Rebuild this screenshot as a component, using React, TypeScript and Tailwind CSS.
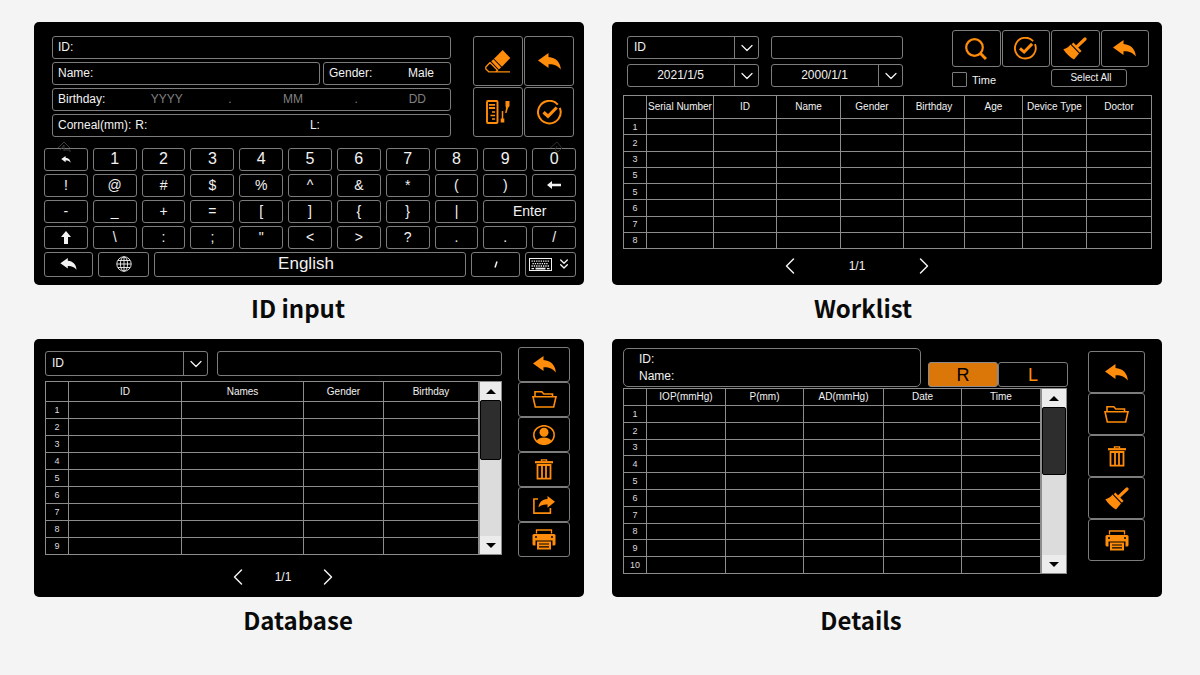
import { ChevronDown, ChevronLeft, ChevronRight, ChevronsDown } from "lucide-react";
import { ReactNode } from "react";

const ReplyIcon = ({ className = "w-[23px] h-[17px]" }: { className?: string }) => (
  <svg viewBox="0 0 23 17" className={className} fill="currentColor">
    <path d="M0 7.5 10.5 0v4C18 4.6 22.6 9.500 22.800 16.500 19.800 12.500 16 11 10.500 11.200V15z" />
  </svg>
);

const CheckIcon = ({ className = "size-[25px]" }: { className?: string }) => (
  <svg viewBox="0 0 25 25" className={className} fill="none" stroke="currentColor">
    <path d="M20.800 4.600A11.300 11.300 0 1 0 22.800 7.800" strokeWidth="2" />
    <path d="M6.500 12.300 11 16.300 19.700 7.500" strokeWidth="3.200" />
  </svg>
);

const EraserIcon = () => (
  <svg viewBox="0 0 26 23" className="w-[26px] h-[23px]" fill="none" stroke="currentColor">
    <path d="M17.700 0 25.300 8 17 16.800 9 8.700z" fill="currentColor" stroke="none" />
    <path d="M7.300 10.300 15 18.400" strokeWidth="3" />
    <path d="M5.300 12.200.8 17v2l3 2.800H25M5 12.500l7.500 7.700-1.700 1.600" strokeWidth="1.300" />
  </svg>
);

const MeasureIcon = () => (
  <svg viewBox="0 0 24 24" className="size-6" fill="none" stroke="currentColor">
    <rect x="1" y="1" width="10.500" height="22" rx="1" strokeWidth="1.900" />
    <path d="M3 4.800h6M3 8h6" strokeWidth="1.800" />
    <path d="M6 12h3M4.500 15.500H9M6 19h3" strokeWidth="1.600" />
    <path d="M16.500 11V20" strokeWidth="1.500" />
    <path d="M16.500 18.500v4" strokeWidth="3.600" />
    <path d="M19.500 1h4v5l-1.500 2-1.500 5h-1.300l.8-5-.5-2z" fill="currentColor" stroke="none" />
  </svg>
);

const SearchIcon = () => (
  <svg viewBox="0 0 22 22" className="size-[22px]" fill="none" stroke="currentColor">
    <circle cx="9.500" cy="9.500" r="8.300" strokeWidth="2.200" />
    <path d="M15.500 15.500 21 21" strokeWidth="3" />
  </svg>
);

const BrushIcon = () => (
  <svg viewBox="0 0 24 23" className="w-6 h-[23px]" fill="none" stroke="currentColor">
    <path d="M22 2 14.500 9.200" strokeWidth="3.200" strokeLinecap="round" />
    <path d="M9.500 6.300 17.700 14.800" strokeWidth="2.400" />
    <path
      d="M7.400 7.600 16 16.500 11 22.500C7.500 20.500 3 16.500.3 12.200 3.500 11.500 5.800 10 7.400 7.600z"
      fill="currentColor"
      stroke="none"
    />
  </svg>
);

const FolderIcon = () => (
  <svg viewBox="0 0 25 17" className="w-[25px] h-[17px]" fill="none" stroke="currentColor" strokeWidth="1.600">
    <path d="M3 5.800V.8h6.800l2 2.200h8.700v2.800" />
    <path d="M1 5.800h23L21.700 16H3.300z" />
  </svg>
);

const UserIcon = () => (
  <svg viewBox="0 0 22 20" className="w-[22px] h-5" fill="none" stroke="currentColor">
    <ellipse cx="11" cy="10" rx="10.200" ry="9.300" strokeWidth="1.500" />
    <circle cx="11" cy="7.300" r="4.500" fill="currentColor" stroke="none" />
    <path d="M3.500 16.500c1-3 4-4 7.500-4s6.500 1 7.500 4c-4 3.500-11 3.500-15 0z" fill="currentColor" stroke="none" />
  </svg>
);

const TrashIcon = () => (
  <svg viewBox="0 0 18 21" className="w-[18px] h-[21px]" fill="none" stroke="currentColor">
    <path d="M0 3.200h18" strokeWidth="2.200" />
    <path d="M6.500 2.500V.9h5v1.600" strokeWidth="1.400" />
    <path d="M2.500 6v13.700h13V6zM7 6v13.500M11 6v13.500" strokeWidth="1.800" />
  </svg>
);

const ShareIcon = () => (
  <svg viewBox="0 0 22 18" className="w-[22px] h-[18px]" fill="none" stroke="currentColor">
    <path d="M5 3H.9v14.100h16.500V12" strokeWidth="1.600" />
    <path d="M22 5.800 14.500 0v3C9 3.500 6 6.500 5.500 11.500 8 9 10.500 8.300 14.500 8.500v3.300z" fill="currentColor" stroke="none" />
  </svg>
);

const PrinterIcon = () => (
  <svg viewBox="0 0 24 21" className="w-6 h-[21px]">
    <path d="M4.500 4.500V1h15v3.500" fill="none" stroke="currentColor" strokeWidth="1.300" />
    <rect x="0.500" y="5" width="23" height="11.500" rx="1.500" fill="currentColor" />
    <circle cx="4" cy="8" r="1" fill="#000" />
    <circle cx="20" cy="8" r="1" fill="#000" />
    <rect x="3.500" y="11.500" width="17" height="9.500" fill="#000" />
    <rect x="5" y="12.500" width="14" height="8" fill="currentColor" />
    <path d="M7 15h10M7 17.800h10" stroke="#000" strokeWidth="1.200" />
  </svg>
);

const ShiftIcon = () => (
  <svg viewBox="0 0 10 13" className="w-[10px] h-[13px]" fill="currentColor">
    <path d="M5 0 10 6H7v7H3V6H0z" />
  </svg>
);

const BackspaceIcon = () => (
  <svg viewBox="0 0 14 8" className="w-[14px] h-2" fill="currentColor">
    <path d="M0 4 5 0v2.800h9v2.400H5V8z" />
  </svg>
);

const GlobeIcon = () => (
  <svg viewBox="0 0 16 16" className="size-4" fill="none" stroke="currentColor" strokeWidth="0.900">
    <circle cx="8" cy="8" r="7.200" />
    <ellipse cx="8" cy="8" rx="3.600" ry="7.200" />
    <path d="M8 .8v14.400M.8 8h14.400M2 4.500h12M2 11.500h12" />
  </svg>
);

const KeyboardIcon = () => (
  <svg viewBox="0 0 23 13" className="w-[23px] h-[13px]" fill="none" stroke="currentColor">
    <rect x="0.500" y="0.500" width="22" height="12" />
    <path d="M2.500 3.200h18M3.500 5.600h16M2.500 8h18" strokeWidth="1.300" strokeDasharray="1.300 1" />
    <path d="M2.500 10.600h2.500M18 10.600h2.500" strokeWidth="1.300" />
    <path d="M6.500 10.600h10" strokeWidth="1.800" />
  </svg>
);

const CommaIcon = () => (
  <svg viewBox="0 0 4 7" className="w-1 h-[7px]" stroke="currentColor" strokeWidth="1.500">
    <path d="M3 .5 1 6.500" />
  </svg>
);

type IconButtonProps = {
  label: string;
  className: string;
  children: ReactNode;
};

function IconButton({ label, className, children }: IconButtonProps) {
  return (
    <button
      aria-label={label}
      className={`flex items-center justify-center rounded-[3px] border border-[#7c7c7c] text-[#ff8c0a] ${className}`}
    >
      {children}
    </button>
  );
}

type PickerProps = {
  label: string;
  value: string;
  centered?: boolean;
};

function Picker({ label, value, centered }: PickerProps) {
  return (
    <div className="relative h-full">
      <select
        aria-label={label}
        className={`block h-full w-full appearance-none rounded-[3px] border border-[#7c7c7c] bg-black pr-[25px] pb-px text-xs ${
          centered ? "text-center [text-align-last:center]" : "pl-[6px]"
        }`}
      >
        <option>{value}</option>
      </select>
      <span className="pointer-events-none absolute inset-y-px right-px flex w-6 items-center justify-center border-l border-[#7c7c7c]">
        <ChevronDown size={20} strokeWidth={1.5} />
      </span>
    </div>
  );
}

type GridTableProps = {
  columns: { title: string; width: string }[];
  rows: number[];
  className: string;
  headClassName: string;
};

function GridTable({ columns, rows, className, headClassName }: GridTableProps) {
  return (
    <table className={`w-full table-fixed border-collapse text-center ${className}`}>
      <colgroup>
        <col className="w-[23px]" />
        {columns.map((column) => (
          <col key={column.title} className={column.width} />
        ))}
      </colgroup>
      <thead>
        <tr className={headClassName}>
          <th className="border border-[#8c8c8c]" />
          {columns.map((column) => (
            <th
              key={column.title}
              className="whitespace-nowrap border border-[#8c8c8c] p-0 text-[10px] leading-3 font-normal"
            >
              {column.title}
            </th>
          ))}
        </tr>
      </thead>
      <tbody>
        {rows.map((row, i) => (
          <tr key={i}>
            <td className="border border-[#8c8c8c] p-0 text-[9px] leading-3 text-[#dcdcdc]">{row}</td>
            {columns.map((column) => (
              <td key={column.title} className="border border-[#8c8c8c] p-0" />
            ))}
          </tr>
        ))}
      </tbody>
    </table>
  );
}

function ScrollBar({ className, thumb }: { className: string; thumb: string }) {
  return (
    <div className={`flex flex-col border border-[#8c8c8c] bg-[#dcdcdc] text-black ${className}`}>
      <button aria-label="Scroll up" className="flex h-[18px] items-center justify-center bg-[#ececec]">
        <svg viewBox="0 0 10 5" className="h-[5px] w-[10px]" fill="currentColor">
          <path d="M0 5 5 0l5 5z" />
        </svg>
      </button>
      <div className="flex-1">
        <div className={`rounded-[2px] border border-black bg-[#2d2d2d] ${thumb}`} />
      </div>
      <button aria-label="Scroll down" className="flex h-[18px] items-center justify-center bg-[#ececec]">
        <svg viewBox="0 0 10 5" className="h-[5px] w-[10px]" fill="currentColor">
          <path d="M0 0h10L5 5z" />
        </svg>
      </button>
    </div>
  );
}

function Pager({ className }: { className: string }) {
  return (
    <div className={`flex items-center justify-center text-xs ${className}`}>
      <button aria-label="Previous page">
        <ChevronLeft size={28} strokeWidth={1.25} />
      </button>
      <span>1/1</span>
      <button aria-label="Next page">
        <ChevronRight size={28} strokeWidth={1.25} />
      </button>
    </div>
  );
}

type ScreenProps = {
  title: string;
  className: string;
  captionClassName: string;
  children: ReactNode;
};

function Screen({ title, className, captionClassName, children }: ScreenProps) {
  return (
    <figure>
      <div className={`rounded-[5px] bg-black text-[#f2f2f2] ${className}`}>{children}</div>
      <figcaption
        className={`pb-1 text-center font-['Noto_Sans_CJK_SC',sans-serif] text-2xl leading-[46px] font-bold text-[#0a0a0a] ${captionClassName}`}
      >
        {title}
      </figcaption>
    </figure>
  );
}

type Key = { label: string; icon?: ReactNode; className?: string };

const keys: Key[] = [
  { label: "Undo", icon: <ReplyIcon className="h-[7px] w-[10px]" /> },
  ...["1", "2", "3", "4", "5", "6", "7", "8", "9", "0"].map((label) => ({ label, className: "text-base" })),
  ...["!", "@", "#", "$", "%", "^", "&", "*", "(", ")"].map((label) => ({ label, className: "text-sm" })),
  { label: "Backspace", icon: <BackspaceIcon /> },
  ...["-", "_", "+", "=", "[", "]", "{", "}", "|"].map((label) => ({ label, className: "text-sm" })),
  { label: "Enter", className: "col-span-2 text-sm" },
  { label: "Shift", icon: <ShiftIcon /> },
  ...["\\", ":", ";", "\"", "<", ">", "?", ".", ".", "/"].map((label) => ({ label, className: "text-sm" })),
];

const keyStyle = "flex items-center justify-center rounded-[3px] border border-[#7c7c7c] pb-px";
const fieldStyle = "flex h-[23px] items-center rounded-[3px] border border-[#7c7c7c] pb-px pl-[5px]";
const inputStyle = "w-0 min-w-0 bg-transparent outline-none placeholder:text-[#808080]";

function IdInput() {
  return (
    <Screen title="ID input" className="h-[263px] pt-[14px] pr-2 pl-[10px]" captionClassName="pr-[22px]">
      <div className="flex items-start gap-[22px] pl-2 pr-[2px]">
        <div className="flex flex-1 flex-col gap-[3px] text-xs">
          <div className={fieldStyle}>
            <label htmlFor="patient-id">ID:</label>
            <input id="patient-id" className={`flex-1 ${inputStyle}`} />
          </div>
          <div className="flex gap-[3px]">
            <div className={`flex-1 ${fieldStyle}`}>
              <label htmlFor="patient-name">Name:</label>
              <input id="patient-name" className={`flex-1 ${inputStyle}`} />
            </div>
            <div className={`w-32 ${fieldStyle}`}>
              <label htmlFor="patient-gender">Gender:</label>
              <input
                id="patient-gender"
                defaultValue="Male"
                className={`flex-1 pr-4 text-right ${inputStyle}`}
              />
            </div>
          </div>
          <div className={fieldStyle}>
            <label htmlFor="birth-year">Birthday:</label>
            <input id="birth-year" placeholder="YYYY" className={`flex-[9] text-center ${inputStyle}`} />
            <span className="text-[#808080]">.</span>
            <input aria-label="Month" placeholder="MM" className={`flex-[9] text-center ${inputStyle}`} />
            <span className="text-[#808080]">.</span>
            <input aria-label="Day" placeholder="DD" className={`flex-[5] pr-6 text-right ${inputStyle}`} />
          </div>
          <div className={fieldStyle}>
            <span>Corneal(mm):</span>
            <label htmlFor="corneal-r" className="pl-1">
              R:
            </label>
            <input id="corneal-r" className={`flex-[5] ${inputStyle}`} />
            <label htmlFor="corneal-l">L:</label>
            <input id="corneal-l" className={`flex-[4] ${inputStyle}`} />
          </div>
        </div>
        <div className="grid grid-cols-2 gap-px">
          <IconButton label="Erase" className="size-[50px]">
            <EraserIcon />
          </IconButton>
          <IconButton label="Back" className="size-[50px]">
            <ReplyIcon />
          </IconButton>
          <IconButton label="Measure" className="size-[50px]">
            <MeasureIcon />
          </IconButton>
          <IconButton label="Confirm" className="size-[50px]">
            <CheckIcon />
          </IconButton>
        </div>
      </div>

      {/* Keyboard */}
      <div className="relative mt-[11px]">
        <div className="grid auto-rows-[23px] grid-cols-11 gap-x-[5px] gap-y-[3px]">
          {keys.map((key, i) => (
            <button key={i} aria-label={key.label} className={`${keyStyle} ${key.className ?? ""}`}>
              {key.icon ?? key.label}
            </button>
          ))}
        </div>
        <div className="mt-[3px] flex h-[25px] gap-[5px]">
          <button aria-label="Back" className={`w-[49px] ${keyStyle}`}>
            <ReplyIcon className="h-3 w-[17px]" />
          </button>
          <button aria-label="Language" className={`w-[51px] ${keyStyle}`}>
            <GlobeIcon />
          </button>
          <button className={`flex-1 pr-2 text-[17px] ${keyStyle}`}>English</button>
          <button aria-label="Comma" className={`w-[49px] ${keyStyle}`}>
            <CommaIcon />
          </button>
          <button aria-label="Hide keyboard" className={`w-[51px] gap-1 ${keyStyle}`}>
            <KeyboardIcon />
            <ChevronsDown size={16} strokeWidth={2} />
          </button>
        </div>
        <svg
          viewBox="0 0 14 12"
          className="absolute -top-[7px] left-[13px] h-3 w-[14px]"
          fill="none"
          stroke="#3a3a3a"
        >
          <path d="M1 7 7 1l6 6M3 9l4-5v6M7 9h6v2" />
        </svg>
        <svg
          viewBox="0 0 14 12"
          className="absolute -top-[7px] right-[13px] h-3 w-[14px]"
          fill="none"
          stroke="#2c2c2c"
        >
          <path d="M1 7 8 1l5 6-4 4-3-2 2-4" />
        </svg>
      </div>
    </Screen>
  );
}

const worklistColumns = [
  { title: "Serial Number", width: "w-[67px]" },
  { title: "ID", width: "w-[63px]" },
  { title: "Name", width: "w-[64px]" },
  { title: "Gender", width: "w-[63px]" },
  { title: "Birthday", width: "w-[61px]" },
  { title: "Age", width: "w-[58px]" },
  { title: "Device Type", width: "w-[64px]" },
  { title: "Doctor", width: "w-[65px]" },
];

function Worklist() {
  return (
    <Screen title="Worklist" className="h-[263px] px-[11px] pt-2" captionClassName="pr-12">
      <div className="flex items-start gap-[49px] pl-1 pr-[2px]">
        <div className="mt-[6px] grid flex-1 auto-rows-[23px] grid-cols-2 gap-x-3 gap-y-[5px]">
          <Picker label="Search field" value="ID" />
          <input
            aria-label="Search"
            className="w-full rounded-[3px] border border-[#7c7c7c] bg-transparent px-2 text-xs"
          />
          <Picker label="To date" value="2021/1/5" centered />
          <Picker label="From date" value="2000/1/1" centered />
        </div>
        <div className="w-[197px]">
          <div className="flex gap-px">
            <IconButton label="Search" className="h-[37px] flex-1">
              <SearchIcon />
            </IconButton>
            <IconButton label="Confirm" className="h-[37px] flex-1">
              <CheckIcon className="size-[23px]" />
            </IconButton>
            <IconButton label="Clear" className="h-[37px] flex-1">
              <BrushIcon />
            </IconButton>
            <IconButton label="Back" className="h-[37px] flex-1">
              <ReplyIcon />
            </IconButton>
          </div>
          <div className="mt-[2px] flex items-start justify-between pr-[22px]">
            <label className="mt-[3px] flex items-center gap-[5px] text-[11px] leading-[14px]">
              <input type="checkbox" className="size-[15px] appearance-none rounded-[1px] border border-[#7c7c7c]" />
              Time
            </label>
            <button className="h-[18px] w-[76px] rounded-[3px] border border-[#7c7c7c] pl-1 text-[10px] leading-4">
              Select All
            </button>
          </div>
        </div>
      </div>
      <GridTable
        columns={worklistColumns}
        rows={[1, 2, 3, 5, 5, 6, 7, 8]}
        className="mt-2 h-[154px]"
        headClassName="h-[23px]"
      />
      <Pager className="mt-[3px] gap-[45px] pr-[60px]" />
    </Screen>
  );
}

const databaseColumns = [
  { title: "ID", width: "w-[113px]" },
  { title: "Names", width: "w-[122px]" },
  { title: "Gender", width: "w-[80px]" },
  { title: "Birthday", width: "w-[95px]" },
];

function Database() {
  return (
    <Screen title="Database" className="h-[258px] pt-2 pl-[11px] pr-[14px]" captionClassName="pr-[22px]">
      <div className="flex items-start gap-4">
        <div className="mt-1 flex-1">
          <div className="flex h-[25px] gap-[9px]">
            <div className="w-[163px]">
              <Picker label="Search field" value="ID" />
            </div>
            <input
              aria-label="Search"
              className="min-w-0 flex-1 rounded-[3px] border border-[#7c7c7c] bg-transparent px-2 text-xs"
            />
          </div>
          <div className="mt-[5px] flex">
            <div className="flex-1">
              <GridTable
                columns={databaseColumns}
                rows={[1, 2, 3, 4, 5, 6, 7, 8, 9]}
                className="h-[174px]"
                headClassName="h-[20px]"
              />
            </div>
            <ScrollBar className="w-[23px]" thumb="h-[60px]" />
          </div>
        </div>
        <div className="flex w-[52px] flex-col">
          <IconButton label="Back" className="h-[35px]">
            <ReplyIcon />
          </IconButton>
          <IconButton label="Open" className="h-[35px]">
            <FolderIcon />
          </IconButton>
          <IconButton label="Patient" className="h-[35px]">
            <UserIcon />
          </IconButton>
          <IconButton label="Delete" className="h-[35px]">
            <TrashIcon />
          </IconButton>
          <IconButton label="Export" className="h-[35px]">
            <ShareIcon />
          </IconButton>
          <IconButton label="Print" className="h-[35px]">
            <PrinterIcon />
          </IconButton>
        </div>
      </div>
      <Pager className="mt-[6px] gap-[23px] pr-[49px]" />
    </Screen>
  );
}

const detailColumns = [
  { title: "IOP(mmHg)", width: "w-[79px]" },
  { title: "P(mm)", width: "w-[78px]" },
  { title: "AD(mmHg)", width: "w-[80px]" },
  { title: "Date", width: "w-[78px]" },
  { title: "Time", width: "w-[79px]" },
];

function Details() {
  return (
    <Screen title="Details" className="h-[258px] pt-[9px] pl-[11px] pr-[17px]" captionClassName="pr-[52px]">
      <div className="flex items-start gap-5">
        <div className="flex-1">
          <div className="flex items-end gap-[7px]">
            <div className="h-[39px] flex-1 rounded-[5px] border border-[#7c7c7c] pt-[2px] pl-[15px] text-xs leading-[17px]">
              <p>ID:</p>
              <p>Name:</p>
            </div>
            <div className="flex w-[140px] text-lg leading-none">
              <button className="h-[25px] flex-1 rounded-[3px] border border-[#8c8c8c] bg-[#db7608] text-black">
                R
              </button>
              <button className="h-[25px] flex-1 rounded-[3px] border border-[#7c7c7c] text-[#ff8c0a]">L</button>
            </div>
          </div>
          <div className="mt-px flex pr-px">
            <div className="flex-1">
              <GridTable
                columns={detailColumns}
                rows={[1, 2, 3, 4, 5, 6, 7, 8, 9, 10]}
                className="h-[186px]"
                headClassName="h-[17px]"
              />
            </div>
            <ScrollBar className="w-[26px]" thumb="h-[68px]" />
          </div>
        </div>
        <div className="mt-[3px] flex w-[59px] flex-col">
          <IconButton label="Back" className="h-[42px]">
            <ReplyIcon />
          </IconButton>
          <IconButton label="Open" className="h-[42px]">
            <FolderIcon />
          </IconButton>
          <IconButton label="Delete" className="h-[42px]">
            <TrashIcon />
          </IconButton>
          <IconButton label="Clear" className="h-[42px]">
            <BrushIcon />
          </IconButton>
          <IconButton label="Print" className="h-[42px]">
            <PrinterIcon />
          </IconButton>
        </div>
      </div>
    </Screen>
  );
}

export default function App() {
  return (
    <main className="min-h-screen bg-[#f4f4f4] pt-[22px] pr-[38px] pl-[34px] font-['Liberation_Sans',Arial,sans-serif]">
      <div className="grid grid-cols-2 gap-x-7 gap-y-1">
        <IdInput />
        <Worklist />
        <Database />
        <Details />
      </div>
    </main>
  );
}
